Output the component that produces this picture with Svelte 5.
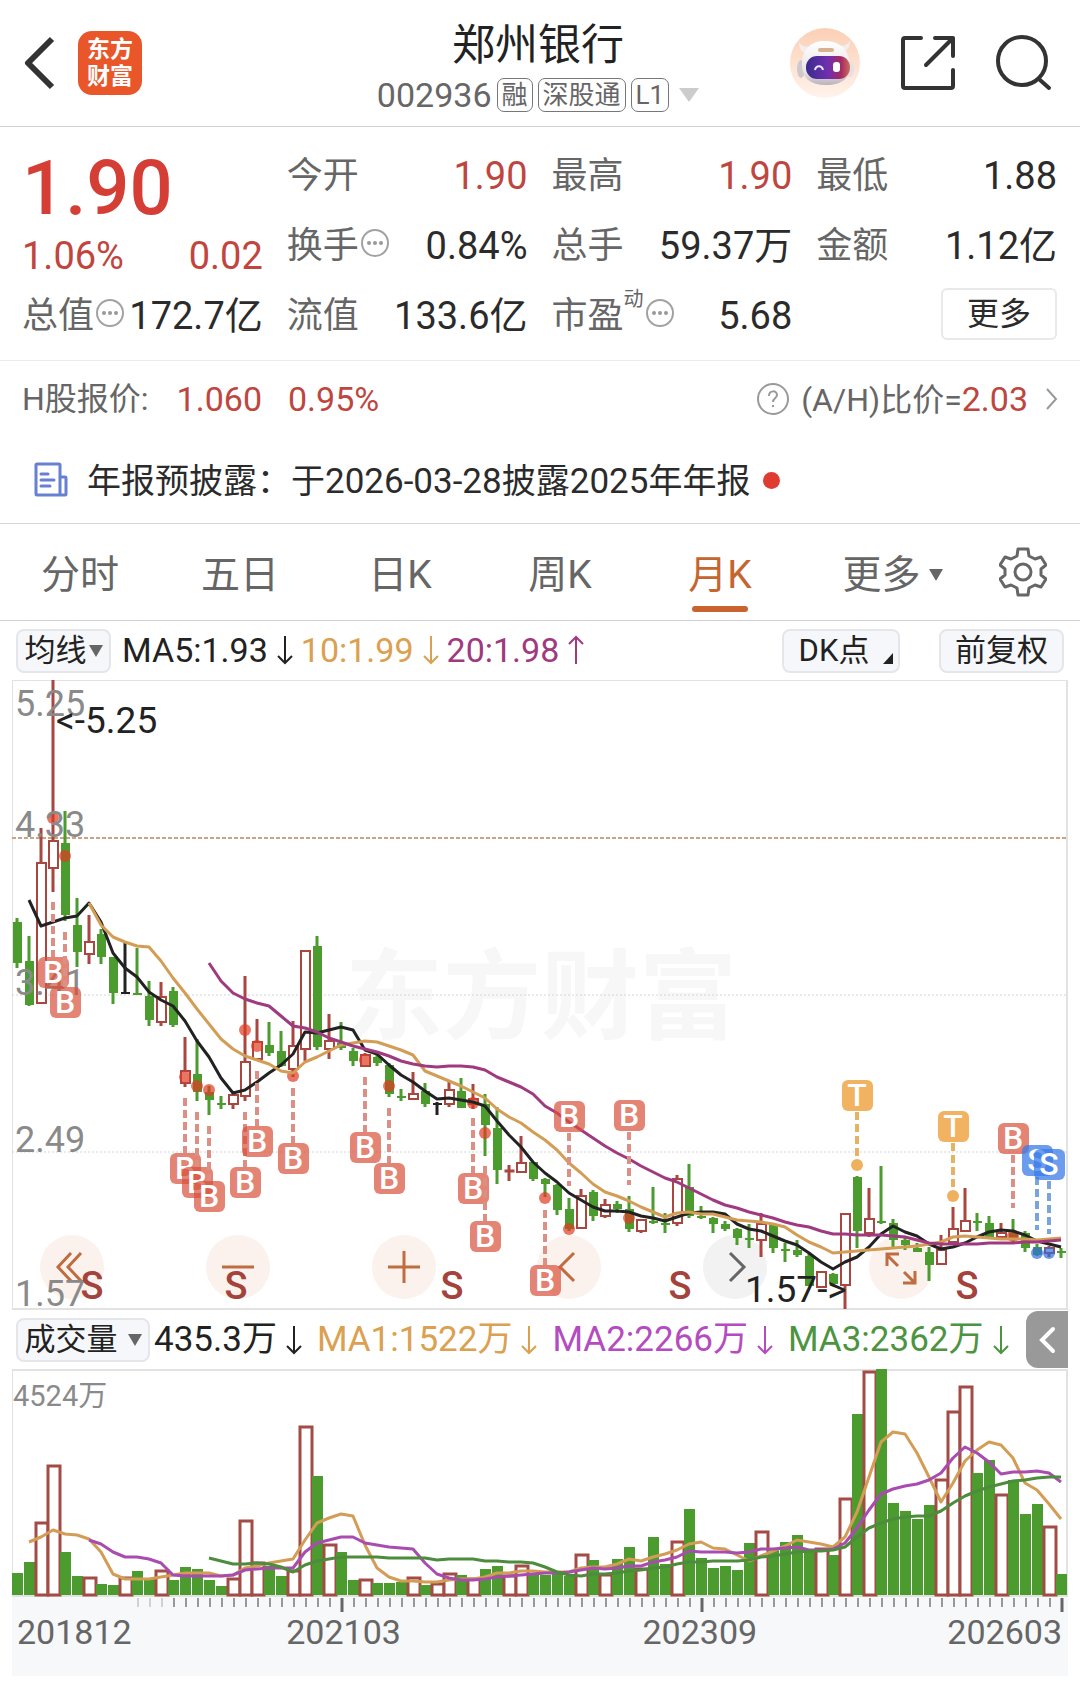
<script lang="ts">
  type Kind = 'r' | 'g' | 'k';
  type Candle = [Kind, number, number, number, number];

  const STEP = 12;
  const FIRST = 17;
  const cx = (i: number) => FIRST + STEP * i;

  // kind, high, body top, body bottom, low
  const candles: Candle[] = [
    ['g', 918, 922, 963, 968], ['g', 936, 961, 1005, 1006], ['r', 828, 863, 1003, 1003], ['r', 680, 841, 868, 892],
    ['g', 811, 843, 915, 921], ['g', 898, 925, 952, 967], ['r', 915, 942, 954, 964], ['g', 929, 934, 957, 964],
    ['g', 957, 957, 993, 1004], ['k', 943, 992, 994, 994], ['g', 948, 993, 995, 995], ['g', 981, 996, 1020, 1026],
    ['r', 982, 997, 1022, 1026], ['g', 987, 991, 1025, 1027], ['r', 1037, 1071, 1083, 1087], ['g', 1039, 1074, 1092, 1101],
    ['g', 1086, 1092, 1100, 1115], ['g', 1096, 1103, 1105, 1109], ['r', 1091, 1095, 1104, 1109], ['r', 976, 1062, 1096, 1101],
    ['r', 1019, 1042, 1059, 1059], ['g', 1022, 1045, 1053, 1056], ['g', 1031, 1051, 1066, 1067], ['r', 1021, 1046, 1069, 1077],
    ['r', 951, 951, 1049, 1061], ['g', 936, 946, 1047, 1050], ['r', 1014, 1041, 1049, 1059], ['g', 1022, 1043, 1048, 1050],
    ['g', 1048, 1051, 1061, 1066], ['r', 1053, 1055, 1066, 1066], ['g', 1053, 1057, 1063, 1066], ['g', 1063, 1065, 1094, 1097],
    ['g', 1089, 1096, 1098, 1101], ['r', 1072, 1094, 1099, 1099], ['g', 1083, 1091, 1104, 1107], ['k', 1102, 1103, 1105, 1115],
    ['r', 1082, 1090, 1104, 1107], ['g', 1078, 1091, 1108, 1108], ['r', 1084, 1099, 1104, 1109], ['g', 1094, 1104, 1125, 1156],
    ['g', 1107, 1128, 1170, 1184], ['r', 1165, 1170, 1171, 1181], ['r', 1136, 1163, 1172, 1172], ['g', 1162, 1162, 1179, 1181],
    ['g', 1178, 1179, 1184, 1197], ['g', 1184, 1185, 1210, 1215], ['g', 1198, 1209, 1229, 1231], ['r', 1189, 1196, 1228, 1228],
    ['g', 1190, 1192, 1216, 1221], ['r', 1199, 1205, 1216, 1218], ['g', 1201, 1204, 1209, 1213], ['g', 1196, 1209, 1229, 1232],
    ['r', 1220, 1220, 1231, 1233], ['g', 1187, 1221, 1223, 1224], ['g', 1213, 1223, 1225, 1233], ['r', 1175, 1179, 1223, 1226],
    ['g', 1164, 1187, 1216, 1218], ['g', 1206, 1216, 1218, 1219], ['g', 1217, 1218, 1224, 1233], ['g', 1221, 1224, 1229, 1231],
    ['g', 1228, 1229, 1238, 1245], ['g', 1224, 1238, 1240, 1248], ['r', 1213, 1224, 1240, 1257], ['g', 1224, 1225, 1248, 1253],
    ['g', 1243, 1249, 1251, 1262], ['g', 1240, 1250, 1255, 1257], ['g', 1254, 1256, 1286, 1286], ['r', 1272, 1272, 1287, 1287],
    ['g', 1273, 1274, 1284, 1285], ['r', 1213, 1214, 1285, 1309], ['g', 1176, 1177, 1231, 1248], ['r', 1188, 1219, 1233, 1237],
    ['g', 1166, 1221, 1223, 1224], ['g', 1219, 1223, 1240, 1248], ['g', 1238, 1240, 1245, 1250], ['g', 1243, 1248, 1252, 1252],
    ['g', 1247, 1252, 1265, 1281], ['r', 1235, 1250, 1264, 1265], ['r', 1207, 1229, 1242, 1242], ['r', 1188, 1221, 1231, 1232],
    ['g', 1213, 1221, 1223, 1231], ['g', 1216, 1223, 1237, 1239], ['r', 1223, 1233, 1237, 1240], ['g', 1219, 1233, 1239, 1242],
    ['g', 1231, 1233, 1248, 1252], ['g', 1244, 1247, 1255, 1256], ['r', 1246, 1248, 1253, 1257], ['g', 1248, 1251, 1253, 1258]
  ];

  const volumeTops = [
    1573, 1562, 1522, 1465, 1552, 1576, 1577, 1584, 1585, 1577, 1571, 1578, 1570, 1580, 1567, 1569, 1580, 1586, 1578, 1520,
    1562, 1566, 1576, 1570, 1426, 1476, 1544, 1552, 1580, 1579, 1583, 1583, 1582, 1577, 1585, 1583, 1573, 1575, 1578, 1569,
    1566, 1575, 1565, 1573, 1575, 1573, 1576, 1554, 1560, 1574, 1559, 1547, 1568, 1537, 1564, 1541, 1509, 1558, 1568, 1566,
    1570, 1543, 1531, 1550, 1542, 1535, 1550, 1548, 1555, 1498, 1414, 1371, 1369, 1503, 1511, 1519, 1505, 1479, 1411, 1386,
    1473, 1460, 1494, 1480, 1514, 1504, 1526, 1574
  ];
  const volumeRed = new Set([
    2, 3, 6, 9, 12, 18, 19, 20, 23, 24, 26, 29, 33, 35, 36, 38, 41, 42, 47, 49, 52, 55, 62, 67, 69, 71, 77, 78, 79, 82, 86
  ]);

  const line = (start: number, ys: number[]) => ys.map((y, i) => `${cx(start + i)},${y}`).join(' ');

  const priceLines = [
    { cls: 'ma5', points: line(1, [
      900, 926, 922, 918, 916, 903, 922, 953, 968, 977, 992, 1000, 1006, 1021, 1041, 1057, 1078, 1093, 1090, 1082, 1073, 1065,
      1054, 1032, 1033, 1030, 1027, 1030, 1050, 1054, 1065, 1075, 1082, 1091, 1099, 1098, 1100, 1102, 1106, 1121, 1135, 1147,
      1162, 1173, 1182, 1193, 1200, 1207, 1211, 1211, 1212, 1216, 1218, 1221, 1217, 1213, 1212, 1212, 1214, 1224, 1229, 1231,
      1236, 1241, 1245, 1253, 1262, 1269, 1262, 1257, 1247, 1234, 1226, 1232, 1236, 1244, 1249, 1247, 1243, 1237, 1232, 1230,
      1231, 1235, 1241, 1244, 1247]) },
    { cls: 'ma10', points: line(6, [
      903, 925, 937, 942, 946, 947, 961, 978, 993, 1009, 1024, 1039, 1049, 1056, 1060, 1064, 1071, 1073, 1062, 1057, 1051, 1045,
      1043, 1041, 1042, 1046, 1050, 1055, 1071, 1076, 1081, 1086, 1092, 1098, 1109, 1117, 1123, 1132, 1140, 1150, 1163, 1173,
      1184, 1192, 1196, 1201, 1207, 1212, 1217, 1213, 1212, 1214, 1214, 1217, 1220, 1221, 1222, 1224, 1227, 1235, 1242, 1247,
      1253, 1252, 1251, 1250, 1249, 1248, 1247, 1246, 1244, 1242, 1237, 1236, 1237, 1238, 1239, 1239, 1239, 1240, 1239, 1238]) },
    { cls: 'ma20', points: line(16, [
      963, 981, 993, 999, 1003, 1006, 1016, 1026, 1028, 1032, 1038, 1042, 1046, 1049, 1052, 1056, 1061, 1064, 1066, 1067, 1066,
      1066, 1067, 1070, 1077, 1082, 1087, 1094, 1106, 1113, 1122, 1130, 1138, 1146, 1153, 1159, 1166, 1172, 1178, 1182, 1188,
      1194, 1200, 1205, 1208, 1212, 1215, 1218, 1222, 1225, 1227, 1231, 1234, 1234, 1235, 1235, 1235, 1236, 1237, 1240, 1243,
      1244, 1244, 1244, 1244, 1243, 1243, 1243, 1242, 1242, 1241, 1240]) }
  ];

  const volumeLines = [
    { cls: 'v1', points: line(1, [
      1542, 1537, 1530, 1534, 1535, 1539, 1552, 1574, 1579, 1579, 1579, 1577, 1575, 1573, 1573, 1573, 1576, 1575, 1568, 1566,
      1563, 1561, 1559, 1540, 1523, 1518, 1514, 1516, 1545, 1568, 1577, 1581, 1581, 1582, 1582, 1580, 1579, 1579, 1577, 1573,
      1573, 1571, 1571, 1572, 1572, 1572, 1568, 1567, 1567, 1564, 1559, 1561, 1557, 1554, 1550, 1544, 1542, 1548, 1549, 1555,
      1561, 1556, 1551, 1546, 1540, 1542, 1544, 1547, 1537, 1512, 1477, 1442, 1432, 1434, 1453, 1477, 1502, 1483, 1461, 1450,
      1442, 1445, 1458, 1483, 1490, 1504, 1519]) },
    { cls: 'v2', points: line(6, [
      1540, 1544, 1552, 1557, 1557, 1559, 1563, 1575, 1576, 1576, 1576, 1576, 1575, 1570, 1569, 1568, 1568, 1568, 1552, 1543,
      1540, 1537, 1537, 1543, 1545, 1547, 1548, 1549, 1563, 1574, 1578, 1580, 1580, 1579, 1577, 1576, 1575, 1574, 1573, 1573,
      1572, 1570, 1568, 1569, 1568, 1566, 1566, 1562, 1560, 1557, 1551, 1552, 1552, 1552, 1553, 1552, 1549, 1549, 1548, 1547,
      1550, 1550, 1549, 1543, 1528, 1510, 1494, 1489, 1486, 1484, 1480, 1473, 1458, 1447, 1453, 1462, 1474, 1472, 1472, 1471,
      1473, 1482]) },
    { cls: 'v3', points: line(16, [
      1558, 1561, 1564, 1564, 1563, 1564, 1567, 1572, 1565, 1561, 1559, 1557, 1557, 1557, 1557, 1558, 1558, 1558, 1558, 1560,
      1559, 1559, 1559, 1561, 1561, 1562, 1562, 1563, 1567, 1572, 1575, 1576, 1574, 1574, 1573, 1571, 1570, 1568, 1567, 1564,
      1562, 1562, 1561, 1561, 1561, 1560, 1557, 1556, 1554, 1552, 1551, 1551, 1550, 1547, 1537, 1528, 1523, 1519, 1517, 1516,
      1516, 1511, 1503, 1496, 1491, 1487, 1484, 1481, 1480, 1478, 1477, 1477]) }
  ];

  // letter, candle index, badge centre, dash start, dash end
  const badges: [string, number, number, number, number][] = [
    ['B', 3, 972, 902, 957], ['B', 4, 1002, 932, 987], ['B', 14, 1168, 1098, 1153], ['B', 15, 1182, 1112, 1167],
    ['B', 16, 1196, 1126, 1181], ['B', 19, 1182, 1112, 1167], ['B', 20, 1141, 1071, 1126], ['B', 23, 1158, 1088, 1143],
    ['B', 29, 1147, 1077, 1132], ['B', 31, 1178, 1108, 1163], ['B', 38, 1188, 1118, 1173], ['B', 39, 1236, 1166, 1221],
    ['B', 44, 1280, 1210, 1265], ['B', 46, 1116, 1133, 1186], ['B', 51, 1115, 1132, 1185], ['T', 70, 1095, 1112, 1165],
    ['T', 78, 1126, 1143, 1196], ['B', 83, 1138, 1155, 1208], ['S', 85, 1160, 1177, 1230], ['S', 86, 1164, 1181, 1234]
  ];

  const dots: [string, number, number][] = [
    ['B', 3, 818], ['B', 4, 856], ['B', 14, 1077], ['B', 15, 1086], ['B', 16, 1090], ['B', 19, 1030], ['B', 20, 1046],
    ['B', 23, 1076], ['B', 29, 1060], ['B', 31, 1086], ['B', 38, 1103], ['B', 39, 1133], ['B', 44, 1198], ['B', 46, 1229],
    ['B', 51, 1218], ['T', 70, 1165], ['T', 78, 1196], ['B', 83, 1236], ['S', 85, 1253], ['S', 86, 1253]
  ];

  const sellMarks = [92, 236, 452, 680, 967];
  const majors = new Set([27, 57, 87]);

  const tools = [
    { label: '最早', icon: 'M31 18L18 32L31 46M41 18L28 32L41 46' },
    { label: '缩小', icon: 'M16 32H48' },
    { label: '放大', icon: 'M16 32H48M32 16V48' },
    { label: '向左', icon: 'M37 18L23 32L37 46' },
    { label: '向右', icon: 'M27 18L41 32L27 46', muted: true },
    { label: '全屏', icon: 'M29 31L18 20M18 31V19H30M35 37L46 48M46 36V48H34' }
  ];

  let period = $state('月K');
  const periods = ['分时', '五日', '日K', '周K', '月K'];
</script>

{#snippet more()}
  <svg class="info" viewBox="0 0 28 28" aria-hidden="true">
    <circle cx="14" cy="14" r="13" fill="none" stroke="#a2a2a2" stroke-width="2" />
    <circle cx="8" cy="14" r="2" fill="#999" /><circle cx="14" cy="14" r="2" fill="#999" /><circle cx="20" cy="14" r="2" fill="#999" />
  </svg>
{/snippet}

{#snippet arrow(up: boolean)}
  <svg class="arrow" viewBox="0 0 16 30" aria-hidden="true">
    <path d={up ? 'M8 29V2M1 9L8 2L15 9' : 'M8 1V28M1 21L8 28L15 21'} fill="none" stroke="currentColor" stroke-width="2" />
  </svg>
{/snippet}

{#snippet caret()}
  <svg class="caret" viewBox="0 0 14 12" aria-hidden="true"><path d="M0 0H14L7 12Z" fill="#666" /></svg>
{/snippet}

{#snippet stat(label: string, value: string, info: boolean, red: boolean, sup: string)}
  <div class="stat">
    <dt>{label}{#if sup}<sup>{sup}</sup>{/if}{#if info}{@render more()}{/if}</dt>
    <dd class:red>{value}</dd>
  </div>
{/snippet}

<main>
  <header>
    <div class="left">
      <button class="icon-btn" aria-label="返回">
        <svg width="32" height="54" viewBox="0 0 32 54"><path d="M28 3L4 27L28 51" fill="none" stroke="#333" stroke-width="6" stroke-linejoin="round" /></svg>
      </button>
      <a class="logo" href="#home"><span>东方</span><span>财富</span></a>
    </div>
    <div class="title">
      <h1>郑州银行</h1>
      <div class="code">
        <span class="num">002936</span><span class="tag">融</span><span class="tag">深股通</span><span class="tag level">L1</span>
        <svg width="20" height="14" viewBox="0 0 20 14" aria-hidden="true"><path d="M0 0H20L10 14Z" fill="#ccc" /></svg>
      </div>
    </div>
    <div class="right">
      <button class="icon-btn" aria-label="智能助手">
        <svg width="70" height="70" viewBox="0 0 70 70">
          <defs>
            <linearGradient id="halo" x1="0" y1="0" x2="0" y2="1"><stop offset="0" stop-color="#fbcfb4" /><stop offset="1" stop-color="#fff3ec" /></linearGradient>
            <linearGradient id="shell" x1="0" y1="0" x2="0" y2="1"><stop offset="0" stop-color="#fff" /><stop offset="0.7" stop-color="#e9e4e6" /><stop offset="1" stop-color="#b9b3ba" /></linearGradient>
            <linearGradient id="visor" x1="0" y1="0" x2="1" y2="0"><stop offset="0" stop-color="#3a2b8c" /><stop offset="0.5" stop-color="#6f2fb0" /><stop offset="0.8" stop-color="#a82a62" /><stop offset="1" stop-color="#c8705c" /></linearGradient>
          </defs>
          <circle cx="35" cy="35" r="35" fill="url(#halo)" />
          <ellipse cx="11" cy="41" rx="4" ry="9" fill="#cfc8cc" /><ellipse cx="60" cy="41" rx="4" ry="8" fill="#e7dfe0" />
          <path d="M9 14C9 22 13 26 19 24L22 18C16 20 11 18 9 14ZM60 12C60 20 57 24 52 23L48 17C54 19 58 17 60 12Z" fill="#f3eeee" />
          <path d="M12 37C12 20 22 13 35 13C49 13 59 21 60 37C61 50 52 57 36 57C20 57 12 50 12 37Z" fill="url(#shell)" />
          <rect x="16" y="28" width="44" height="23" rx="11" fill="url(#visor)" />
          <path d="M25 42C26 37 32 37 33 42" fill="none" stroke="#e5e8ff" stroke-width="2" />
          <rect x="43" y="34" width="7" height="10" rx="3" fill="#fff" />
          <rect x="28" y="20" width="16" height="4" rx="2" fill="#d8b190" />
        </svg>
      </button>
      <button class="icon-btn" aria-label="分享">
        <svg width="56" height="58" viewBox="0 0 56 58" fill="none" stroke="#333" stroke-width="4" stroke-linecap="round" stroke-linejoin="round">
          <path d="M21 4H5Q3 4 3 6V52Q3 54 5 54H51Q53 54 53 52V36M35 4H53V22M53 4L26 31" />
        </svg>
      </button>
      <button class="icon-btn" aria-label="搜索">
        <svg width="56" height="58" viewBox="0 0 56 58" fill="none" stroke="#333" stroke-width="4" stroke-linecap="round">
          <circle cx="26" cy="27" r="24" /><path d="M44 46L53 54" />
        </svg>
      </button>
    </div>
  </header>

  <section class="quote">
    <div class="price">
      <strong>1.90</strong>
      <div class="change"><span>1.06%</span><span>0.02</span></div>
    </div>
    <dl>
      {@render stat('今开', '1.90', false, true, '')}
      {@render stat('最高', '1.90', false, true, '')}
      {@render stat('最低', '1.88', false, false, '')}
      {@render stat('换手', '0.84%', true, false, '')}
      {@render stat('总手', '59.37万', false, false, '')}
      {@render stat('金额', '1.12亿', false, false, '')}
    </dl>
    <dl class="last">
      {@render stat('总值', '172.7亿', true, false, '')}
      {@render stat('流值', '133.6亿', false, false, '')}
      {@render stat('市盈', '5.68', true, false, '动')}
      <div class="stat end"><button class="more-btn">更多</button></div>
    </dl>
  </section>

  <section class="hshare">
    <span>H股报价:</span><b class="hp">1.060</b><b>0.95%</b>
    <a href="#ratio">
      <svg width="32" height="32" viewBox="0 0 32 32" aria-hidden="true" fill="none" stroke="#999" stroke-width="2">
        <circle cx="16" cy="16" r="15" /><path d="M12 13C12 7 20 7 20 12C20 15 16 15 16 19" /><path d="M16 22V24" />
      </svg>
      <span>(A/H)比价=<b>2.03</b></span>
      <svg width="12" height="24" viewBox="0 0 12 24" aria-hidden="true"><path d="M1 2L10 12L1 22" fill="none" stroke="#999" stroke-width="2" /></svg>
    </a>
  </section>

  <a class="news" href="#report">
    <svg width="34" height="36" viewBox="0 0 34 36" aria-hidden="true" fill="none" stroke="#6780d2" stroke-width="3">
      <path d="M26 33V3Q26 2 25 2H3Q2 2 2 3V32Q2 33 3 33H31Q32 33 32 32V16Q32 15 31 15H26" stroke-linejoin="round" /><path d="M7 12H14M7 18H20M7 24H16" stroke-linecap="round" />
    </svg>
    <span class="news-text">年报预披露：于<span class="num">2026-03-28</span>披露<span class="num">2025</span>年年报</span>
    <i class="unread"></i>
  </a>

  <nav>
    {#each periods as p}
      <button class:active={period === p} onclick={() => (period = p)}>{p}</button>
    {/each}
    <button>更多{@render caret()}</button>
    <button class="gear" aria-label="设置">
      <svg width="48" height="50" viewBox="0 0 48 50" fill="none" stroke="#666" stroke-width="3" stroke-linejoin="round">
        <path d="M19 2H29L30 9L36 12L42 10L47 18L42 22V28L47 32L42 40L36 38L30 41L29 48H19L18 41L12 38L6 40L1 32L6 28V22L1 18L6 10L12 12L18 9Z" />
        <circle cx="24" cy="25" r="8" />
      </svg>
    </button>
  </nav>

  <section class="panel">
    <div class="bar">
      <label class="pick"><select aria-label="均线"><option>均线</option></select>{@render caret()}</label>
      <span class="ind dark">MA5:1.93{@render arrow(false)}</span>
      <span class="ind amber">10:1.99{@render arrow(false)}</span>
      <span class="ind plum">20:1.98{@render arrow(true)}</span>
      <button class="pill dk">DK点<svg width="10" height="11" viewBox="0 0 10 11" aria-hidden="true"><path d="M10 0V11H0Z" fill="#222" /></svg></button>
      <button class="pill">前复权</button>
    </div>

    <div class="chart">
      <div class="tools">
        {#each tools as t}
          <button class:muted={t.muted} aria-label={t.label}>
            <svg viewBox="0 0 64 64" fill="none" stroke="currentColor" stroke-width="3"><path d={t.icon} /></svg>
          </button>
        {/each}
      </div>
      <svg class="plot" viewBox="12 680 1056 630" role="img" aria-label="月K线">
        <text class="watermark" x="541" y="1031" text-anchor="middle">东方财富</text>
        <path class="frame" d="M12 680H1067V1309H12Z" />
        <path d="M12 838H1067" stroke="#cfa283" stroke-width="2" stroke-dasharray="4 2" />
        <path d="M12 995H1067M12 1152H1067" stroke="#d5d5d5" stroke-width="1" stroke-dasharray="2 2" />
        {#each candles as [kind, high, top, bottom, low], i}
          <g class={kind}>
            <path class="wick" d={`M${cx(i)} ${high}V${top}M${cx(i)} ${bottom}V${low}`} />
            {#if kind === 'r' && bottom - top > 2}
              <rect class="hollow" x={cx(i) - 4} y={top} width="9" height={bottom - top} />
            {:else if bottom - top > 2}
              <rect class="solid" x={cx(i) - 4} y={top} width="9" height={bottom - top} />
            {:else}
              <rect class="solid" x={cx(i) - 4} y={top} width="9" height="2" />
            {/if}
          </g>
        {/each}
        {#each dots as [kind, i, y]}
          <circle class={kind} cx={cx(i)} cy={y} r="6" />
        {/each}
        {#each priceLines as l}
          <polyline class={l.cls} points={l.points} />
        {/each}
        <g class="axis">
          <text x="15" y="716">5.25</text>
          <text x="15" y="837">4.33</text>
          <text x="15" y="995">3.41</text>
          <text x="15" y="1152">2.49</text>
          <text x="15" y="1306">1.57</text>
        </g>
        {#each badges as [kind, i, y, from, to]}
          <g class={kind}>
            <path class="lead" d={`M${cx(i)} ${from}V${to}`} />
            <rect x={cx(i) - 15} y={y - 15} width="31" height="31" rx="6" />
            <text x={cx(i)} y={y + 11} text-anchor="middle">{kind}</text>
          </g>
        {/each}
        {#each sellMarks as x}
          <text class="sell" {x} y="1299" text-anchor="middle">S</text>
        {/each}
        <text class="callout" x="56" y="733">&lt;-5.25</text>
        <text class="callout" x="745" y="1302">1.57-&gt;</text>
      </svg>
    </div>

    <div class="bar vol">
      <label class="pick wide"><select aria-label="副图指标"><option>成交量</option></select>{@render caret()}</label>
      <span class="ind dark">435.3万{@render arrow(false)}</span>
      <span class="ind amber">MA1:1522万{@render arrow(false)}</span>
      <span class="ind violet">MA2:2266万{@render arrow(false)}</span>
      <span class="ind green">MA3:2362万{@render arrow(false)}</span>
      <button class="drawer" aria-label="展开">
        <svg width="18" height="28" viewBox="0 0 18 28"><path d="M15 3L4 14L15 25" fill="none" stroke="#fff" stroke-width="4" stroke-linecap="round" /></svg>
      </button>
    </div>

    <svg class="plot" viewBox="12 1369 1056 228" role="img" aria-label="成交量">
      <path class="frame" d="M12 1370H1067V1596H12Z" />
      <text class="peak" x="13" y="1406">4524万</text>
      {#each volumeTops as top, i}
        {#if volumeRed.has(i)}
          <rect class="vred" x={cx(i) - 5} y={top + 1} width="12" height={1594 - top} />
        {:else}
          <rect class="vgreen" x={cx(i) - 5} y={top} width="11" height={1595 - top} />
        {/if}
      {/each}
      {#each volumeLines as l}
        <polyline class={l.cls} points={l.points} />
      {/each}
    </svg>

    <div class="timeline">
      <svg class="plot" viewBox="12 0 1056 16" aria-hidden="true">
        {#each volumeTops as _, i}
          {#if i > 9}
            <path d={`M${cx(i) + 1} 1V${majors.has(i) ? 15 : 10}`} stroke={majors.has(i) ? '#666' : '#999'} stroke-width={majors.has(i) ? 3 : 2} opacity={i < 13 ? 0.4 : 1} />
          {/if}
        {/each}
      </svg>
      <div class="dates"><span>201812</span><span>202103</span><span>202309</span><span>202603</span></div>
    </div>
  </section>
</main>

<style>
  :global(body) { margin: 0; background: #fff; }
  main {
    font-family: Roboto, "Noto Sans CJK SC", sans-serif;
    line-height: 1.2;
    color: #2b2b2b;
    background: #fff;
    padding-bottom: 12px;
  }
  button, select { font: inherit; color: inherit; background: none; border: 0; padding: 0; margin: 0; appearance: none; cursor: pointer; }
  svg { display: block; flex: none; }
  a { color: inherit; text-decoration: none; }
  b { font-weight: 400; color: #bd4740; }

  header {
    display: grid;
    grid-template-columns: 1fr auto 1fr;
    align-items: center;
    box-sizing: border-box;
    height: 127px;
    padding: 0 28px 0 24px;
    border-bottom: 1px solid #d2d2d2;
  }
  .left { display: flex; align-items: center; gap: 22px; }
  .logo {
    display: flex; flex-direction: column; align-items: center; justify-content: center;
    width: 64px; height: 64px; border-radius: 14px;
    background: #e8562a; color: #fff; font-size: 23px; line-height: 27px; font-weight: 700;
  }
  .title { display: flex; flex-direction: column; align-items: center; padding-top: 12px; }
  h1 { margin: 0; font-size: 43px; line-height: 52px; font-weight: 400; color: #222; }
  .code { display: flex; align-items: center; gap: 5px; color: #666; line-height: 48px; font-size: 34px; }
  .tag {
    box-sizing: border-box; height: 34px; padding: 0 4px; border: 1px solid #777; border-radius: 7px;
    font-size: 26px; line-height: 32px;
  }
  .level { margin-right: 5px; }
  .right { display: flex; align-items: center; justify-content: flex-end; gap: 40px; }

  .quote { padding: 15px 23px 8px 22px; border-bottom: 1px solid #ececec; display: grid; grid-template-columns: repeat(4, 1fr); column-gap: 24px; }
  .price { color: #d53e35; display: flex; flex-direction: column; }
  .price strong { font-size: 76px; line-height: 92px; font-weight: 500; }
  .change { display: flex; justify-content: space-between; font-size: 38px; line-height: 44px; color: #c2453d; }
  dl { margin: 0; display: grid; grid-template-columns: repeat(3, 1fr); column-gap: 24px; grid-column: 2 / 5; grid-auto-rows: 70px; }
  dl.last { grid-column: 1 / 5; grid-template-columns: repeat(4, 1fr); }
  .stat { display: flex; align-items: center; justify-content: space-between; white-space: nowrap; }
  .stat.end { justify-content: flex-end; }
  dt { display: flex; align-items: center; font-size: 36px; color: #666; }
  dt sup { font-size: 20px; line-height: 20px; align-self: flex-start; margin-top: -6px; }
  dd { margin: 0; font-size: 38px; }
  dd.red { color: #bd4740; }
  .info { width: 28px; height: 28px; margin-left: 2px; margin-bottom: 8px; }
  .more-btn { width: 116px; height: 52px; border: 2px solid #e9e9e9; border-radius: 6px; font-size: 32px; line-height: 44px; margin-bottom: 6px; }

  .hshare { display: flex; align-items: center; height: 76px; padding: 0 22px; color: #666; font-size: 32px; }
  .hshare b { font-size: 34px; }
  .hshare .hp { margin: 0 26px 0 28px; }
  .hshare a { margin-left: auto; display: flex; align-items: center; gap: 12px; }
  .hshare a svg:last-child { margin-left: 6px; }

  .news { display: flex; align-items: center; height: 86px; padding: 0 34px; border-bottom: 1px solid #d6d6d6; font-size: 34px; }
  .news-text { margin: 0 13px 0 19px; padding-top: 4px; }
  .news .num { font-size: 35px; }
  .unread { width: 17px; height: 17px; border-radius: 50%; background: #e03b30; }

  nav {
    display: grid; grid-template-columns: 160fr 160fr 160fr 160fr 160fr 185fr 95fr;
    height: 96px; border-bottom: 1px solid #d2d2d2; font-size: 39px; color: #666;
  }
  nav button { display: flex; align-items: center; justify-content: center; gap: 8px; padding-top: 6px; position: relative; }
  nav .gear { padding: 0 20px 0 0; }
  .active { color: #c5652f; }
  .active::after { content: ""; position: absolute; bottom: 8px; width: 56px; height: 6px; border-radius: 3px; background: #c96330; }
  .caret { width: 14px; height: 12px; }

  .panel { padding: 0 12px; }
  .bar { display: flex; align-items: center; height: 59px; padding: 0 4px; font-size: 34px; white-space: nowrap; }
  .pick, .pill {
    box-sizing: border-box; flex: none; height: 44px; display: flex; align-items: center; justify-content: center;
    border: 2px solid #e4e6ea; border-radius: 8px; background: #f6f7fa; font-size: 31px; color: #222;
  }
  .pick { width: 95px; margin-right: 11px; gap: 2px; }
  .pick.wide { width: 134px; margin-right: 4px; gap: 10px; }
  .pill { width: 125px; }
  .dk { width: 118px; gap: 14px; margin-left: auto; margin-right: 39px; padding-left: 10px; }
  .dk svg { align-self: flex-end; margin-bottom: 7px; }
  .ind { display: flex; align-items: center; gap: 9px; margin-right: 8px; }
  .vol .ind { font-size: 35px; margin-right: 15px; }
  .vol .green { margin-right: 0; }
  .arrow { width: 16px; height: 30px; }
  .dark { color: #222; }
  .amber { color: #dba050; }
  .plum { color: #a03a80; }
  .violet { color: #b44cc0; }
  .green { color: #4c9440; }
  .bar.vol { padding-right: 0; }
  .drawer { display: flex; flex: none; align-items: center; justify-content: center; width: 42px; height: 57px; margin-left: auto; border-radius: 12px 0 0 12px; background: #999; }

  .chart { position: relative; }
  .plot { width: 100%; height: auto; overflow: hidden; }
  .chart .plot { position: relative; pointer-events: none; }
  .tools { position: absolute; left: 0; right: 0; bottom: 11px; padding: 0 135px 0 28px; display: flex; justify-content: space-between; }
  .tools button { width: 64px; height: 64px; border-radius: 50%; background: #fbf2ed; color: #bf6c40; }
  .tools .muted { background: #f2f2f2; color: #666; }

  .frame { fill: none; stroke: #e2e2e2; stroke-width: 2; }
  .watermark { font-size: 98px; font-weight: 700; fill: #f7f7f7; }
  .wick { stroke-width: 3; }
  .r .wick { stroke: #a9463f; }
  .g .wick { stroke: #4b9b2f; }
  .k .wick { stroke: #222; }
  .hollow { fill: #fff; stroke: #a9463f; stroke-width: 2; }
  .r .solid { fill: #a9463f; stroke: #a9463f; }
  .g .solid { fill: #4b9b2f; }
  .k .solid { fill: #222; }
  polyline { fill: none; stroke-width: 3; stroke-linejoin: round; }
  .ma5 { stroke: #222; }
  .ma10 { stroke: #d39d55; }
  .ma20 { stroke: #a03a80; }
  .v1 { stroke: #d39d55; }
  .v2 { stroke: #a94cb0; }
  .v3 { stroke: #4c8c3c; }
  circle.B { fill: #e03a22; fill-opacity: 0.7; }
  circle.T { fill: #eea33f; fill-opacity: 0.85; }
  circle.S { fill: #2f6fe0; fill-opacity: 0.7; }
  .lead { stroke-width: 4; stroke-dasharray: 8 4; fill: none; }
  .B .lead { stroke: #dc8f84; }
  .T .lead { stroke: #e6b264; }
  .S .lead { stroke: #7aa4dc; }
  g.B rect { fill: #d9503a; fill-opacity: 0.7; }
  g.T rect { fill: #eda03a; fill-opacity: 0.8; }
  g.S rect { fill: #3a7be8; fill-opacity: 0.75; }
  g.B text, g.T text, g.S text { fill: #fff; font-size: 32px; font-weight: 500; }
  .axis text { font-size: 36px; fill: #8a8a8a; }
  .callout { font-size: 37px; fill: #222; }
  .sell { font-size: 38px; font-weight: 500; fill: #a4433c; }
  .peak { font-size: 29px; fill: #8a8a8a; }
  .vred { fill: #fff; stroke: #a24c45; stroke-width: 3; }
  .vgreen { fill: #4b9b2f; }

  .timeline { background: #f7f8fa; height: 79px; }
  .dates { display: grid; grid-template-columns: 150fr 360fr 360fr 186fr; font-size: 34px; line-height: 38px; color: #666; padding: 0 6px 0 5px; }
  .dates span:nth-child(2), .dates span:nth-child(3) { text-align: center; }
  .dates span:last-child { text-align: right; }
</style>
